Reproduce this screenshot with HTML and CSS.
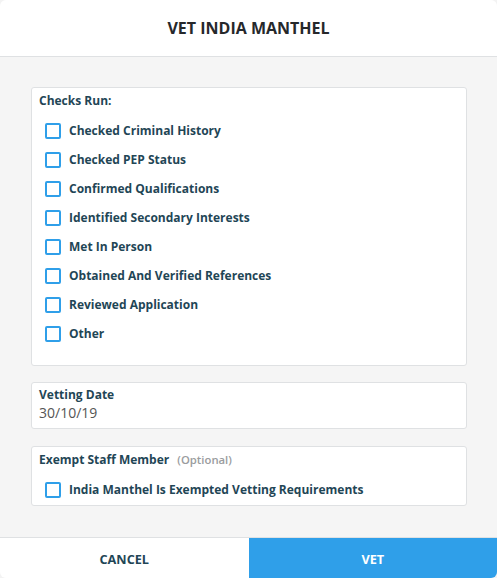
FILE: index.html
```html
<!DOCTYPE html>
<html>
<head>
<meta charset="utf-8">
<link rel="stylesheet" href="styles.css">
</head>
<body>
<div class="modal">
  <header class="modal-header">VET INDIA MANTHEL</header>
  <main class="modal-body">
    <section class="card checks">
      <div class="card-title">Checks Run:</div>
      <ul class="check-list">
        <li class="check-row"><span class="box"></span><span class="label">Checked Criminal History</span></li>
        <li class="check-row"><span class="box"></span><span class="label">Checked PEP Status</span></li>
        <li class="check-row"><span class="box"></span><span class="label">Confirmed Qualifications</span></li>
        <li class="check-row"><span class="box"></span><span class="label">Identified Secondary Interests</span></li>
        <li class="check-row"><span class="box"></span><span class="label">Met In Person</span></li>
        <li class="check-row"><span class="box"></span><span class="label">Obtained And Verified References</span></li>
        <li class="check-row"><span class="box"></span><span class="label">Reviewed Application</span></li>
        <li class="check-row"><span class="box"></span><span class="label">Other</span></li>
      </ul>
    </section>
    <section class="card date">
      <div class="card-title">Vetting Date</div>
      <div class="date-value">30/10/19</div>
    </section>
    <section class="card exempt">
      <div class="card-title">Exempt Staff Member <span class="optional">(Optional)</span></div>
      <ul class="check-list">
        <li class="check-row"><span class="box"></span><span class="label">India Manthel Is Exempted Vetting Requirements</span></li>
      </ul>
    </section>
  </main>
  <footer class="modal-footer">
    <button class="btn btn-cancel">CANCEL</button>
    <button class="btn btn-vet">VET</button>
  </footer>
</div>
</body>
</html>
```

FILE: styles.css
```css
* { box-sizing: border-box; }
html, body { margin: 0; padding: 0; background: #f3f3f3; }
body { font-family: "Open Sans", "Noto Sans", sans-serif; }
.modal {
  width: 497px;
  height: 578px;
  background: #f5f5f5;
  border-radius: 6px;
  overflow: hidden;
  display: flex;
  flex-direction: column;
}
.modal-header {
  height: 57px;
  background: #fff;
  border-bottom: 1px solid #dfe1e3;
  display: flex;
  align-items: center;
  justify-content: center;
  font-size: 16px;
  font-weight: 700;
  color: #26282b;
  padding-bottom: 1px;
}
.modal-body {
  flex: 1;
  padding: 30px 30px 30px 31px;
  display: flex;
  flex-direction: column;
  gap: 16px;
}
.card {
  background: #fff;
  border: 1px solid #dfe1e3;
  border-radius: 3px;
  padding: 5px 7px 0 7px;
}
.card-title {
  font-size: 12px;
  font-weight: 700;
  line-height: 16px;
  color: #1f4656;
}
.optional {
  font-size: 11.3px;
  font-weight: 600;
  color: #9a9c9e;
  margin-left: 5px;
}
.check-list {
  list-style: none;
  margin: 7px 0 0 0;
  padding: 0 0 0 6px;
}
.checks { padding-bottom: 16px; height: 279px; }
.check-row {
  height: 29px;
  display: flex;
  align-items: center;
}
.box {
  width: 16px;
  height: 16px;
  border: 2px solid #2f9fe9;
  border-radius: 2px;
  flex: none;
  margin-right: 8px;
}
.label {
  font-size: 12px;
  font-weight: 700;
  color: #1f4656;
}
.date { padding: 4px 7px 7px 7px; height: 47px; }
.date-value {
  font-size: 14px;
  line-height: 18px;
  color: #555;
  margin-top: 1px;
}
.exempt { margin-top: 1px; height: 60px; }
.modal-footer {
  height: 41px;
  border-top: 1px solid #dfe1e3;
  display: flex;
}
.btn {
  flex: 1;
  border: none;
  margin: 0;
  padding: 2px 0 0 0;
  font-family: "Open Sans", "Noto Sans", sans-serif;
  font-size: 12.7px;
  font-weight: 700;
  cursor: pointer;
}
.btn-cancel { background: #fff; color: #1f4656; }
.btn-vet { background: #2f9fe9; color: #fff; }
```
